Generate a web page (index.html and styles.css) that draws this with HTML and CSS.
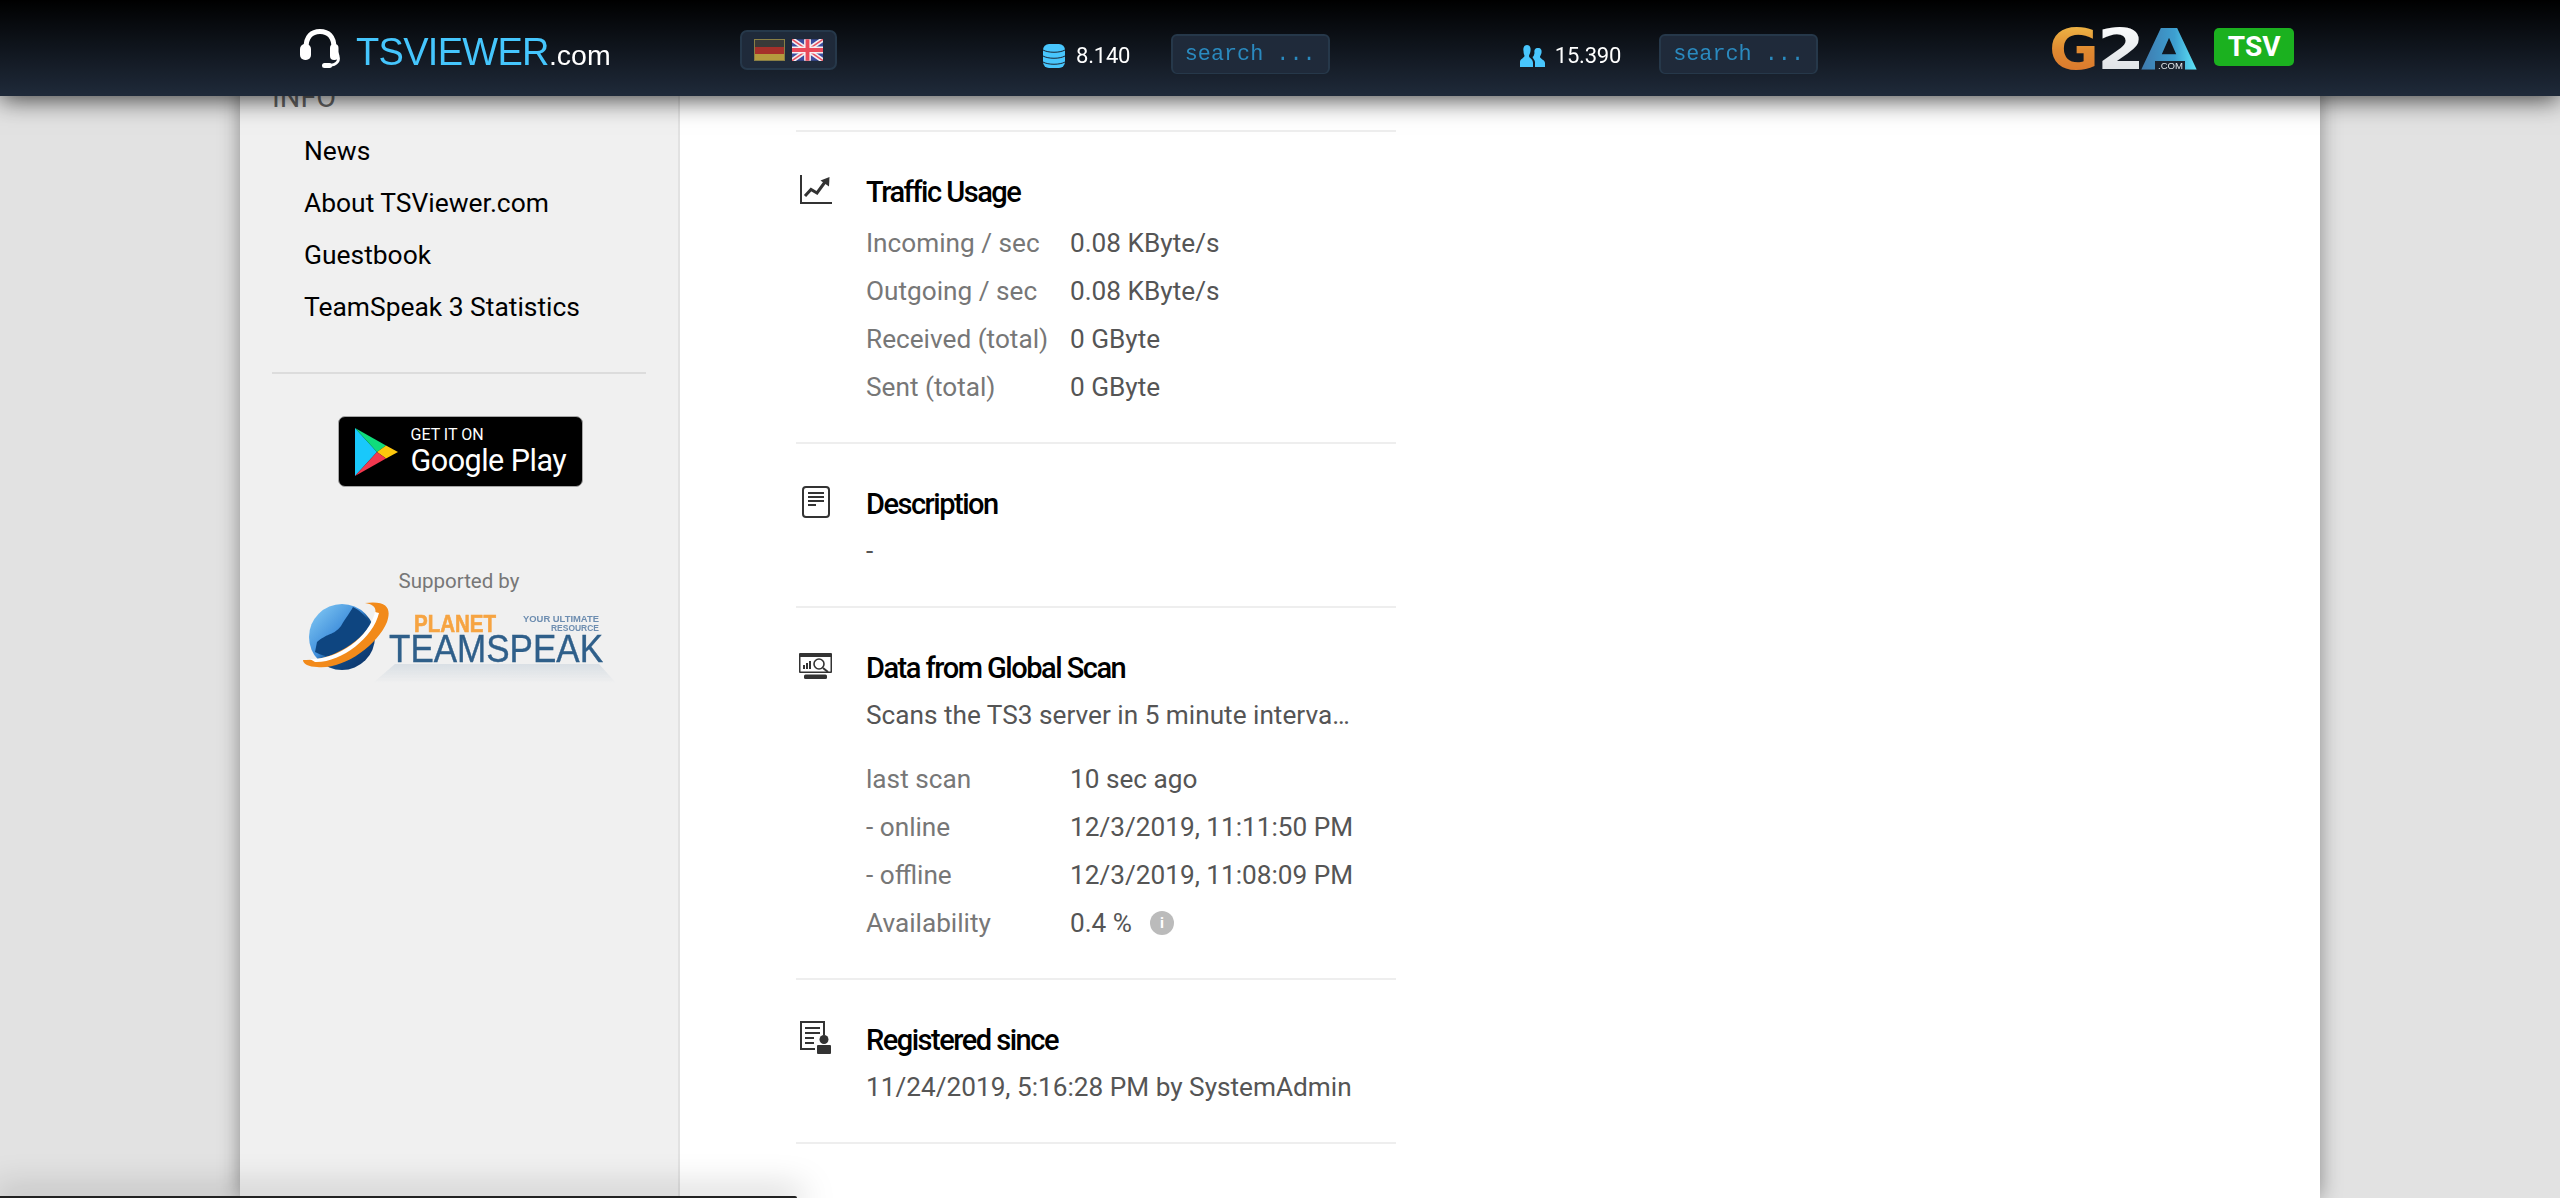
FILE: index.html
```html
<!DOCTYPE html>
<html lang="en">
<head>
<meta charset="utf-8">
<title>TSViewer.com</title>
<link rel="stylesheet" href="styles.css">
</head>
<body>
<header class="topbar">
  <a class="brand">
    <svg class="headset" viewBox="0 0 40 39"><path d="M6 19C6 7 12 2.500 20 2.500S34 7 34 19" fill="none" stroke="#fff" stroke-width="5"/><rect x="0" y="15" width="11" height="16" rx="5" fill="#fff"/><rect x="30" y="15" width="8.500" height="16" rx="4" fill="#fff"/><path d="M37 24C40.500 31 38 36 28 36.500" fill="none" stroke="#fff" stroke-width="2.800"/><rect x="22" y="34" width="10" height="5" rx="2.500" fill="#fff"/></svg>
    <span class="brand-name">TSVIEWER</span><span class="brand-tld">.com</span>
  </a>
  <div class="lang">
    <svg class="flag" viewBox="0 0 31 22"><rect width="31" height="22" fill="#8a7f45"/><rect x="1" y="1" width="29" height="7" fill="#3a3a38"/><rect x="1" y="8" width="29" height="7" fill="#a5302a"/><rect x="1" y="15" width="29" height="6" fill="#b59a3e"/></svg>
    <svg class="flag" viewBox="0 0 32 22"><rect width="32" height="22" fill="#3a4d9e"/><path d="M0 0L32 22M32 0L0 22" stroke="#f3eef2" stroke-width="5"/><path d="M0 0L32 22M32 0L0 22" stroke="#e8505f" stroke-width="1.600"/><path d="M16 0V22M0 11H32" stroke="#f7f0f2" stroke-width="7"/><path d="M16 0V22M0 11H32" stroke="#e94a5a" stroke-width="4"/></svg>
  </div>
  <div class="stat stat-servers">
    <svg class="stat-db" viewBox="0 0 22 24"><rect width="22" height="24" rx="6" fill="#48c6fd"/><path d="M0 6C5 9 17 9 22 6M0 12C5 15 17 15 22 12M0 18C5 21 17 21 22 18" fill="none" stroke="#1b2533" stroke-width="1"/></svg>
    <span class="stat-num">8.140</span>
  </div>
  <div class="search"><span>search ...</span></div>
  <div class="stat stat-users">
    <svg class="stat-us" viewBox="0 0 25 22"><path d="M7 0C10 0 11 3 10.500 6 10 9 9 10 9 11 9 13 13 14 13 18V22H0V17C0 14 4 13 4.500 11 4.500 10 3.500 9 3.500 6 3 3 4 0 7 0Z" fill="#48c6fd"/><path d="M18 3C21 3 22 5 21.500 8 21 10 20 11 20 12 20.500 14 25 15 25 18V22H15V17C15 15 13 14 12.500 12 14 11 14 10 14.500 8 14 5 15 3 18 3Z" fill="#48c6fd"/></svg>
    <span class="stat-num">15.390</span>
  </div>
  <div class="search search-b"><span>search ...</span></div>
  <svg class="g2a" viewBox="0 0 148 42">
    <defs>
      <linearGradient id="gg" x1="0" y1="0" x2="0" y2="1"><stop offset="0" stop-color="#f4c64e"/><stop offset=".5" stop-color="#e08a30"/><stop offset="1" stop-color="#d8702c"/></linearGradient>
      <linearGradient id="gw" x1="0" y1="0" x2="0" y2="1"><stop offset="0" stop-color="#fff"/><stop offset="1" stop-color="#d8dde2"/></linearGradient>
      <linearGradient id="ga" x1="0" y1="0" x2="1" y2="0"><stop offset="0" stop-color="#3f79ad"/><stop offset=".6" stop-color="#3d9fd0"/><stop offset="1" stop-color="#5fe6f8"/></linearGradient>
    </defs>
    <text class="g2a-l" x="0" y="41.500" textLength="50" lengthAdjust="spacingAndGlyphs" fill="url(#gg)">G</text>
    <text class="g2a-l" x="48" y="41.500" textLength="48" lengthAdjust="spacingAndGlyphs" fill="url(#gw)">2</text>
    <text class="g2a-l" x="92" y="41.500" textLength="56" lengthAdjust="spacingAndGlyphs" fill="url(#ga)">A</text>
    <rect x="106" y="33" width="30" height="9" fill="#1a222e"/>
    <text class="g2a-c" x="109" y="41" textLength="25" lengthAdjust="spacingAndGlyphs">.COM</text>
  </svg>
  <a class="tsv">TSV</a>
</header>

<div class="wrap">
  <aside class="side">
    <h3 class="side-title">INFO</h3>
    <ul class="menu">
      <li>News</li>
      <li>About TSViewer.com</li>
      <li>Guestbook</li>
      <li>TeamSpeak 3 Statistics</li>
    </ul>
    <hr class="side-rule">
    <a class="play">
      <svg class="play-mark" viewBox="0 0 43 48"><polygon points="0,0 22,24 0,48" fill="#19c8fb"/><polygon points="0,0 31,17.500 22,24" fill="#10dc7c"/><polygon points="31,17.500 43,24 31,30.500 22,24" fill="#fdc70c"/><polygon points="0,48 22,24 31,30.500" fill="#f2384f"/></svg>
      <span class="play-text"><span class="play-small">GET IT ON</span><span class="play-big">Google Play</span></span>
    </a>
    <p class="supported">Supported by</p>
    <svg class="planet" viewBox="0 0 313 81">
      <defs>
        <linearGradient id="pg" x1="0" y1="0" x2="1" y2="1"><stop offset="0" stop-color="#8ad0f7"/><stop offset=".45" stop-color="#3f8edb"/><stop offset=".55" stop-color="#134f8c"/><stop offset="1" stop-color="#0a2f63"/></linearGradient>
        <linearGradient id="pr" x1="0" y1="0" x2="0" y2="1"><stop offset="0" stop-color="#a9bccd" stop-opacity=".32"/><stop offset="1" stop-color="#a9bccd" stop-opacity="0"/></linearGradient>
      </defs>
      <polygon points="92,62 296,62 313,81 70,81" fill="url(#pr)"/>
      <circle cx="39" cy="35" r="33" fill="url(#pg)"/>
      <path d="M14 40C26 30 30 34 38 24 44 14 46 12 50 5 62 11 72 24 70 38 62 52 34 62 12 50Z" fill="#0e4580"/>
      <path d="M0 58C30 60 68 34 72 12 74 6 70 2 62 1 86 -2 88 8 84 20 74 44 40 68 14 65 6 65 0 62 0 58Z" fill="#f28a1a"/>
      <path d="M7 57C34 58 66 36 72 10L76 11C70 36 38 61 12 60Z" fill="#fff"/>
      <text class="pl-planet" x="111" y="30" textLength="82" lengthAdjust="spacingAndGlyphs">PLANET</text>
      <text class="pl-res" x="220" y="20" textLength="76" lengthAdjust="spacingAndGlyphs">YOUR ULTIMATE</text>
      <text class="pl-res" x="248" y="29" textLength="48" lengthAdjust="spacingAndGlyphs">RESOURCE</text>
      <text class="pl-team" x="86" y="60" textLength="214" lengthAdjust="spacingAndGlyphs">TEAMSPEAK</text>
    </svg>
  </aside>

  <main class="content">
    <div class="lead"></div>

    <section class="block">
      <svg class="ico ico-traffic" viewBox="0 0 32 29"><path d="M1 0V28H32" fill="none" stroke="#333" stroke-width="2"/><path d="M5 21L11 14.500 17 18 25 7" fill="none" stroke="#333" stroke-width="3"/><polygon points="20.500,5.500 29.500,2 29,11.500" fill="#333"/></svg>
      <div class="body">
        <h2 class="title">Traffic Usage</h2>
        <div class="rows rows-gap">
          <span class="k">Incoming / sec</span><span class="v">0.08 KByte/s</span>
          <span class="k">Outgoing / sec</span><span class="v">0.08 KByte/s</span>
          <span class="k">Received (total)</span><span class="v">0 GByte</span>
          <span class="k">Sent (total)</span><span class="v">0 GByte</span>
        </div>
      </div>
    </section>

    <section class="block">
      <svg class="ico ico-doc" viewBox="0 0 28 32"><rect x="1" y="1" width="26" height="30" rx="3" fill="none" stroke="#333" stroke-width="2"/><path d="M6 7H22M6 11H22M6 15H22M6 19H14" stroke="#333" stroke-width="2"/></svg>
      <div class="body">
        <h2 class="title">Description</h2>
        <p class="line">-</p>
      </div>
    </section>

    <section class="block">
      <svg class="ico ico-scan" viewBox="0 0 33 26"><rect width="33" height="20" rx="1" fill="#333"/><rect x="1.500" y="4" width="30" height="14.500" fill="#fff"/><path d="M5 16V12M8 16V10M11 16V8" stroke="#333" stroke-width="2"/><circle cx="20" cy="11" r="5" fill="#fff" stroke="#333" stroke-width="1.600"/><path d="M24 15L29 19" stroke="#333" stroke-width="2"/><rect x="5" y="21.500" width="23" height="4.500" rx="1.500" fill="#333"/></svg>
      <div class="body">
        <h2 class="title">Data from Global Scan</h2>
        <p class="line">Scans the TS3 server in 5 minute interva…</p>
        <div class="rows rows-top">
          <span class="k">last scan</span><span class="v">10 sec ago</span>
          <span class="k">- online</span><span class="v">12/3/2019, 11:11:50 PM</span>
          <span class="k">- offline</span><span class="v">12/3/2019, 11:08:09 PM</span>
          <span class="k">Availability</span><span class="v v-info">0.4 % <i class="info">i</i></span>
        </div>
      </div>
    </section>

    <section class="block">
      <svg class="ico ico-reg" viewBox="0 0 31 33"><rect x="1" y="1" width="23" height="27" fill="none" stroke="#333" stroke-width="2"/><path d="M5 7H20M5 12H20M5 17H14M5 22H14" stroke="#333" stroke-width="2"/><rect x="15" y="14" width="16" height="19" fill="#fff"/><circle cx="24" cy="18.500" r="4.500" fill="#333"/><rect x="17" y="24" width="14" height="9" rx="1" fill="#333"/></svg>
      <div class="body">
        <h2 class="title">Registered since</h2>
        <p class="line">11/24/2019, 5:16:28 PM by SystemAdmin</p>
      </div>
    </section>
  </main>
</div>
<div class="bottom-bar"></div>
</body>
</html>
```

FILE: styles.css
```css
* { box-sizing: border-box; }
html, body { height: 100%; }
body {
  margin: 0;
  overflow: hidden;
  background: #e2e2e2;
  font-family: Roboto, "Liberation Sans", sans-serif;
  font-size: 26.2px;
  color: #555;
}

/* top bar */
.topbar {
  position: fixed;
  top: 0;
  left: 0;
  right: 0;
  height: 96px;
  z-index: 5;
  display: flex;
  align-items: flex-start;
  background: linear-gradient(#000 0%, #1f2a3a 100%);
  box-shadow: 0 3px 24px rgba(0, 0, 0, .75);
}
.brand {
  display: flex;
  align-items: baseline;
  width: 440px;
  margin-left: 300px;
  margin-top: 29px;
  font-family: "Liberation Sans", Arial, sans-serif;
  color: #fff;
}
.headset { width: 40px; height: 39px; margin-right: 16px; align-self: flex-start; flex: none; }
.brand-name { color: #45c6fd; font-size: 38px; line-height: 46px; letter-spacing: -.7px; }
.brand-tld { font-size: 28.500px; line-height: 46px; }

.lang {
  width: 97px;
  height: 40px;
  margin-top: 30px;
  display: flex;
  align-items: center;
  gap: 7px;
  padding-left: 12px;
  background: #1f2a3a;
  border: 2px solid #26384a;
  border-radius: 7px;
}
.flag { width: 31px; height: 22px; filter: blur(.5px); }

.stat { display: flex; align-items: center; height: 26px; margin-top: 43px; }
.stat-servers { margin-left: 206px; gap: 11px; }
.stat-users { margin-left: 190px; gap: 10px; }
.stat-db { width: 22px; height: 24px; }
.stat-us { width: 25px; height: 22px; }
.stat-num { color: #fff; font-size: 22px; line-height: 26px; letter-spacing: -.2px; }

.search {
  width: 159px;
  height: 40px;
  margin-top: 34px;
  margin-left: 40.500px;
  padding-left: 12px;
  display: flex;
  align-items: center;
  background: #1f2a3a;
  border: 2px solid #26384a;
  border-bottom-width: 1px;
  border-radius: 6px;
  font-family: "Liberation Mono", "Courier New", monospace;
  font-size: 21.800px;
  color: #2a8abf;
}
.search-b { margin-left: 38px; }
.g2a { width: 148px; height: 42px; margin-top: 28px; margin-left: 231px; flex: none; overflow: visible; }
.g2a-l { font-family: "DejaVu Sans", sans-serif; font-weight: 700; font-size: 57px; }
.g2a-c { font-family: "Liberation Sans", sans-serif; font-size: 9px; fill: #dfe6ea; }
.tsv {
  width: 80px;
  height: 38px;
  margin-top: 28px;
  margin-left: 17px;
  background: #1bb11f;
  border-radius: 5px;
  color: #fff;
  font-size: 28px;
  font-weight: 700;
  line-height: 38px;
  text-align: center;
}

/* page */
.wrap {
  width: 2080px;
  height: 100%;
  margin: 0 auto;
  display: flex;
  background: #fff;
  box-shadow: 0 0 20px rgba(0, 0, 0, .4);
}
.side {
  width: 440px;
  flex: none;
  padding-top: 73px;
  padding-left: 32px;
  padding-right: 32px;
  display: flex;
  flex-direction: column;
  background: #f0f0f0;
  border-right: 2px solid #e2e2e2;
}
.side-title {
  margin: 0 0 4px;
  font-size: 28.800px;
  font-weight: 400;
  line-height: 48px;
  color: #666;
}
.menu { margin: 0; padding: 0 0 0 32px; list-style: none; color: #000; font-size: 26.400px; }
.menu li { line-height: 52px; }
.side-rule {
  width: 100%;
  height: 2px;
  margin: 39px 0 42px;
  border: 0;
  background: #dcdcdc;
}
.play {
  width: 245px;
  height: 71px;
  flex: none;
  align-self: center;
  margin-left: 2px;
  padding-left: 16px;
  display: flex;
  align-items: center;
  gap: 13px;
  background: #000;
  border: 1px solid #a6a6a6;
  border-radius: 7px;
  color: #fff;
}
.play-mark { width: 43px; height: 48px; flex: none; }
.play-text { display: flex; flex-direction: column; }
.play-small { font-size: 16px; line-height: 18px; }
.play-big { font-size: 30.500px; line-height: 34px; letter-spacing: -.5px; }
.supported {
  margin: 79px 0 6px;
  font-size: 20.500px;
  line-height: 30px;
  text-align: center;
  color: #777;
}
.planet { width: 313px; height: 81px; align-self: center; overflow: visible; filter: blur(.5px); }
.pl-planet { font-family: "Liberation Sans", sans-serif; font-weight: 700; font-size: 23px; fill: #f6a442; stroke: #f6a442; stroke-width: .6px; }
.pl-res { font-family: "Liberation Sans", sans-serif; font-weight: 700; font-size: 8.500px; fill: #6d8db0; }
.pl-team { font-family: "Liberation Sans", sans-serif; font-size: 38px; fill: #2f5f8a; stroke: #2f5f8a; stroke-width: .4px; }

/* main column */
.content { flex: 1; padding-left: 116px; }
.lead { width: 600px; height: 132px; border-bottom: 2px solid #eee; }
.block {
  width: 600px;
  display: grid;
  grid-template-columns: 70px 1fr;
  align-items: start;
  padding-top: 35px;
  padding-bottom: 31px;
  border-bottom: 2px solid #eee;
}
.ico-traffic { width: 32px; height: 29px; margin: 8px 0 0 4px; }
.ico-doc { width: 28px; height: 32px; margin: 7px 0 0 6px; }
.ico-scan { width: 33px; height: 26px; margin: 10px 0 0 3px; }
.ico-reg { width: 31px; height: 33px; margin: 6px 0 0 4px; }

.title {
  margin: 0 0 -2px;
  color: #000;
  font-size: 29px;
  font-weight: 500;
  line-height: 50px;
  letter-spacing: -1.500px;
}
.line { margin: 0; line-height: 48px; color: #555; }
.rows { display: grid; grid-template-columns: 204px auto; grid-auto-rows: 48px; align-items: center; }
.rows-gap { margin-top: 4px; }
.rows-top { margin-top: 16px; }
.k { color: #777; }
.v { color: #555; }
.v-info { display: flex; align-items: center; gap: 18px; }
.info {
  width: 24px;
  height: 24px;
  flex: none;
  border-radius: 50%;
  background: #bbb;
  color: #fff;
  font-size: 15px;
  font-style: normal;
  font-weight: 700;
  line-height: 24px;
  text-align: center;
}
.bottom-bar {
  position: fixed;
  left: 0;
  bottom: 0;
  width: 797px;
  height: 2px;
  background: #222;
  border-top-right-radius: 3px;
  box-shadow: 0 0 34px 6px rgba(0, 0, 0, .26);
}
```
